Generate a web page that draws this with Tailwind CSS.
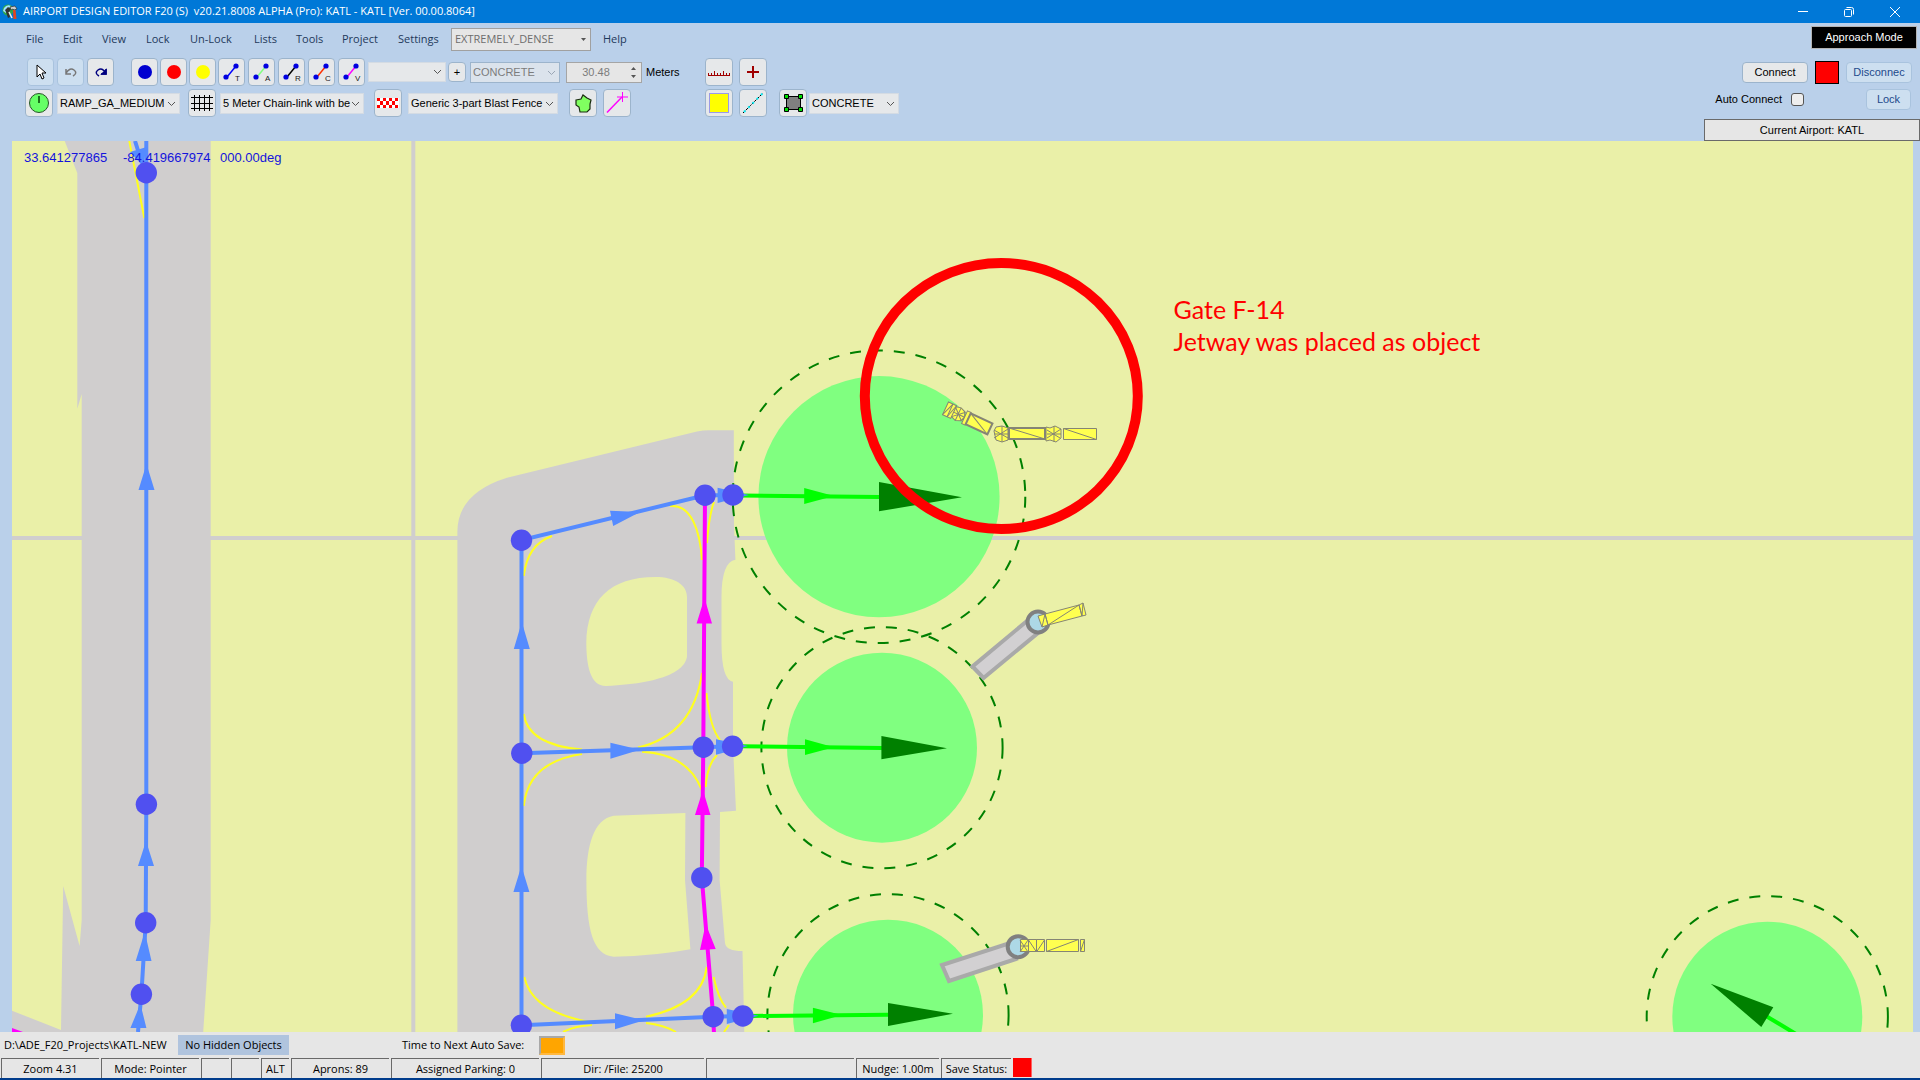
<!DOCTYPE html>
<html lang="en">
<head>
<meta charset="utf-8">
<title>Airport Design Editor F20</title>
<script src="https://cdn.jsdelivr.net/npm/@tailwindcss/browser@4"></script>
</head>
<body class="flex h-screen flex-col overflow-hidden bg-[#bad0ea] font-['Liberation_Sans',sans-serif] text-[11px] text-black">

<!-- Title bar -->
<header class="flex h-[23px] shrink-0 items-center bg-[#0078d7] text-white">
  <svg class="ml-[2px] mr-[5px] size-4" viewBox="0 0 16 16"><circle cx="6" cy="6" r="5.500" fill="#2fa84a"/><path d="M2 4q3-4 7-2l-3 3-2 4-3-2z" fill="#9fe0ff"/><path d="M3 6l3-3 3 2-2 3 1 5-2 1-2-6z" fill="#333"/><path d="M8 3l5-1 2 3-3 1-1-1-2 1z" fill="#ccc" stroke="#222" stroke-width=".6"/><path d="M11 6h2.500l1 9h-3z" fill="#e2451c"/><path d="M7 8l3 6" stroke="#eee" stroke-width="1.500"/></svg>
  <h1 class="whitespace-pre font-['Open_Sans',sans-serif] text-[11px]">AIRPORT DESIGN EDITOR F20 (S)  v20.21.8008 ALPHA (Pro): KATL - KATL [Ver. 00.00.8064]</h1>
  <div class="ml-auto mr-[2px] flex h-full">
    <button aria-label="Minimize" class="grid w-[46px] place-items-center"><svg class="size-3" viewBox="0 0 12 12" stroke="#fff" fill="none"><path d="M1 5.500h10"/></svg></button>
    <button aria-label="Restore" class="grid w-[46px] place-items-center"><svg class="size-3" viewBox="0 0 12 12" stroke="#fff" fill="none"><rect x="1.500" y="3.500" width="7" height="7" rx="1"/><path d="M3.500 1.500h5a2 2 0 0 1 2 2v5"/></svg></button>
    <button aria-label="Close" class="grid w-[46px] place-items-center"><svg class="size-3" viewBox="0 0 12 12" stroke="#fff" fill="none"><path d="M1 1l10 10M11 1L1 11"/></svg></button>
  </div>
</header>

<!-- Menus and toolbars -->
<div class="flex h-[118px] shrink-0 justify-between">
  <div class="flex flex-col gap-[2px]">
    <nav class="flex h-8 items-center pl-[26px] font-['Open_Sans',sans-serif] text-[11px] text-[#1e395b]">
      <a href="#" class="w-[37px]">File</a><a href="#" class="w-[39px]">Edit</a><a href="#" class="w-[44px]">View</a><a href="#" class="w-[44px]">Lock</a><a href="#" class="w-16">Un-Lock</a><a href="#" class="w-[42px]">Lists</a><a href="#" class="w-[46px]">Tools</a><a href="#" class="w-14">Project</a><a href="#" class="w-[53px]">Settings</a>
      <span class="relative w-[140px]">
        <select disabled aria-label="Scenery density" class="block h-[23px] w-full appearance-none border border-[#a0a0a0] bg-[#e6e6e6] pl-[3px] text-[#6d6d6d]"><option>EXTREMELY_DENSE</option></select>
        <svg class="pointer-events-none absolute right-1 top-[9px] h-[5px] w-[7px]" viewBox="0 0 7 5"><path d="M1 1h5L3.500 4z" fill="#555"/></svg>
      </span>
      <a href="#" class="ml-3">Help</a>
    </nav>

    <div class="flex h-[30px] items-center pl-[27px]">
      <div class="flex gap-[3px]">
        <button aria-label="Pointer" class="grid h-7 w-[27px] place-items-center rounded border border-[#a9c3de] bg-[#cddff0]"><svg class="size-5" viewBox="0 0 20 20"><path d="M6 3v12l3-3 2 5 2-1-2-5h4z" fill="#fff" stroke="#000"/></svg></button>
        <button aria-label="Undo" class="grid h-7 w-[27px] place-items-center rounded border border-[#a9c3de] bg-[#cddff0]"><svg class="size-5" viewBox="0 0 20 20" fill="none" stroke="#777" stroke-width="1.500"><path d="M5 7v5h5M5 11q4-6 8-3t-1 6"/></svg></button>
        <button aria-label="Redo" class="grid h-7 w-[27px] place-items-center rounded border border-[#9cb4cc] bg-[#e6e8ea]"><svg class="size-5" viewBox="0 0 20 20" fill="none" stroke="#000080" stroke-width="1.500"><path d="M15 7v5h-5M15 11q-4-6-8-3t1 6"/><path d="M11 12h4V8z" fill="#000080"/></svg></button>
      </div>
      <div class="ml-[17px] flex gap-[2px]">
        <button aria-label="Blue node" class="grid h-7 w-[27px] place-items-center rounded border border-[#9cb4cc] bg-[#e6e8ea]"><span class="size-[14px] rounded-full bg-[#0000d0]"></span></button>
        <button aria-label="Red node" class="grid h-7 w-[27px] place-items-center rounded border border-[#9cb4cc] bg-[#e6e8ea]"><span class="size-[14px] rounded-full bg-[#ff0000]"></span></button>
        <button aria-label="Yellow node" class="grid h-7 w-[27px] place-items-center rounded border border-[#9cb4cc] bg-[#e6e8ea]"><span class="size-[14px] rounded-full bg-[#ffff00]"></span></button>
      </div>
      <div class="ml-[2px] flex gap-[3px]">
        <button aria-label="Taxi link" class="grid h-7 w-[27px] place-items-center rounded border border-[#9cb4cc] bg-[#e6e8ea]"><svg class="size-6" viewBox="0 0 24 24"><path d="M7 17L16 6" stroke="#0000ff" stroke-width="1.500"/><circle cx="6" cy="17" r="2.600" fill="#0000e0"/><circle cx="16" cy="6" r="2.600" fill="#0000e0"/><text x="15" y="21" font-size="8" fill="#222">T</text></svg></button>
        <button aria-label="Apron link" class="grid h-7 w-[27px] place-items-center rounded border border-[#9cb4cc] bg-[#e6e8ea]"><svg class="size-6" viewBox="0 0 24 24"><path d="M7 17L16 6" stroke="#80ff80" stroke-width="1.500"/><circle cx="6" cy="17" r="2.600" fill="#0000e0"/><circle cx="16" cy="6" r="2.600" fill="#0000e0"/><text x="15" y="21" font-size="8" fill="#222">A</text></svg></button>
        <button aria-label="Runway link" class="grid h-7 w-[27px] place-items-center rounded border border-[#9cb4cc] bg-[#e6e8ea]"><svg class="size-6" viewBox="0 0 24 24"><path d="M7 17L16 6" stroke="#000" stroke-width="1.500"/><circle cx="6" cy="17" r="2.600" fill="#0000e0"/><circle cx="16" cy="6" r="2.600" fill="#0000e0"/><text x="15" y="21" font-size="8" fill="#222">R</text></svg></button>
        <button aria-label="Closed link" class="grid h-7 w-[27px] place-items-center rounded border border-[#9cb4cc] bg-[#e6e8ea]"><svg class="size-6" viewBox="0 0 24 24"><path d="M7 17L16 6" stroke="#ff3000" stroke-width="1.500"/><circle cx="6" cy="17" r="2.600" fill="#0000e0"/><circle cx="16" cy="6" r="2.600" fill="#0000e0"/><text x="15" y="21" font-size="8" fill="#222">C</text></svg></button>
        <button aria-label="Vehicle link" class="grid h-7 w-[27px] place-items-center rounded border border-[#9cb4cc] bg-[#e6e8ea]"><svg class="size-6" viewBox="0 0 24 24"><path d="M7 17L16 6" stroke="#ff00ff" stroke-width="1.500"/><circle cx="6" cy="17" r="2.600" fill="#0000e0"/><circle cx="16" cy="6" r="2.600" fill="#0000e0"/><text x="15" y="21" font-size="8" fill="#222">V</text></svg></button>
      </div>
      <span class="relative ml-[3px] w-[78px]">
        <select aria-label="Taxiway name" class="block h-5 w-full appearance-none border border-[#d4dbe3] bg-[#e6e8ea]"><option></option></select>
        <svg class="pointer-events-none absolute right-1 top-[7px] h-[6px] w-[9px]" viewBox="0 0 9 6" fill="none" stroke="#555"><path d="M1 1l3.500 3.500L8 1"/></svg>
      </span>
      <button aria-label="Add taxiway name" class="ml-[2px] grid h-5 w-[18px] place-items-center rounded border border-[#9cb4cc] bg-[#e6e8ea]">+</button>
      <span class="relative ml-1 w-[90px]">
        <select disabled aria-label="Taxiway surface" class="block h-[21px] w-full appearance-none border border-[#9cb4cc] bg-[#dbe3ec] pl-[2px] text-[#7c7c7c]"><option>CONCRETE</option></select>
        <svg class="pointer-events-none absolute right-1 top-[8px] h-[6px] w-[9px]" viewBox="0 0 9 6" fill="none" stroke="#9aa6b5"><path d="M1 1l3.500 3.500L8 1"/></svg>
      </span>
      <span class="relative ml-[6px] w-[76px]">
        <input id="width" disabled value="30.48" class="block h-[21px] w-full border border-[#a5a5a5] bg-[#e6e6e6] pr-4 text-center text-[#7c7c7c]">
        <svg class="pointer-events-none absolute right-[5px] top-1 h-[13px] w-[7px]" viewBox="0 0 7 13" fill="#555"><path d="M1 4h5L3.500 1zM1 9h5L3.500 12z"/></svg>
      </span>
      <label for="width" class="ml-[4px] w-[59px]">Meters</label>
      <button aria-label="Ruler" class="grid h-7 w-7 place-items-center rounded border border-[#9cb4cc] bg-[#e6e8ea]"><svg class="size-6" viewBox="0 0 24 24" stroke="#a00000"><path d="M1 15.500h22M1.500 13v2M4.500 13v2M7.500 11v4M10.500 13v2M13.500 13v2M16.500 11v4M19.500 13v2M22.500 13v2"/></svg></button>
      <button aria-label="Add point" class="ml-[6px] grid h-7 w-7 place-items-center rounded border border-[#9cb4cc] bg-[#e6e8ea]"><svg class="size-6" viewBox="0 0 24 24" stroke="#a00000" stroke-width="2"><path d="M6 12h12M12 6v12"/></svg></button>
    </div>

    <div class="flex h-7 items-center pl-[25px]">
      <button aria-label="Parking" class="grid h-7 w-7 place-items-center rounded border border-[#9cb4cc] bg-[#e6e8ea]"><svg class="size-6" viewBox="0 0 24 24"><circle cx="12" cy="12" r="9.500" fill="#66ff66" stroke="#285528"/><path d="M12 5v7" stroke="#064006" stroke-width="1.500"/></svg></button>
      <span class="relative ml-1 w-[123px]">
        <select aria-label="Parking type" class="block h-[21px] w-full appearance-none border border-[#d4dbe3] bg-[#e6e8ea] pl-[2px]"><option>RAMP_GA_MEDIUM</option></select>
        <svg class="pointer-events-none absolute right-1 top-[8px] h-[6px] w-[9px]" viewBox="0 0 9 6" fill="none" stroke="#555"><path d="M1 1l3.500 3.500L8 1"/></svg>
      </span>
      <button aria-label="Chain-link fence" class="ml-2 grid h-7 w-7 place-items-center rounded border border-[#9cb4cc] bg-[#e6e8ea]"><svg class="size-6" viewBox="0 0 24 24" stroke="#000"><path d="M1 6.500h22M1 12.500h22M1 17.500h22M4.500 4v16M9.500 4v16M14.500 4v16M19.500 4v16"/></svg></button>
      <span class="relative ml-1 w-[144px]">
        <select aria-label="Fence type" class="block h-[21px] w-full appearance-none border border-[#d4dbe3] bg-[#e6e8ea] pl-[2px] pr-3"><option>5 Meter Chain-link with be</option></select>
        <svg class="pointer-events-none absolute right-1 top-[8px] h-[6px] w-[9px]" viewBox="0 0 9 6" fill="none" stroke="#555"><path d="M1 1l3.500 3.500L8 1"/></svg>
      </span>
      <button aria-label="Blast fence" class="ml-[10px] grid h-7 w-7 place-items-center rounded border border-[#9cb4cc] bg-[#e6e8ea]"><svg class="size-6" viewBox="0 0 24 24"><path d="M1 7h22v10H1z" fill="#fff"/><path d="M1 7h3v3H1zM7 7h3v3H7zM13 7h3v3h-3zM19 7h3v3h-3zM4 10h3v4H4zM10 10h3v4h-3zM16 10h3v4h-3zM1 14h3v3H1zM7 14h3v3H7zM13 14h3v3h-3zM19 14h3v3h-3z" fill="#f00"/></svg></button>
      <span class="relative ml-[6px] w-[150px]">
        <select aria-label="Blast fence type" class="block h-[21px] w-full appearance-none border border-[#d4dbe3] bg-[#e6e8ea] pl-[2px] pr-3"><option>Generic 3-part Blast Fence</option></select>
        <svg class="pointer-events-none absolute right-1 top-[8px] h-[6px] w-[9px]" viewBox="0 0 9 6" fill="none" stroke="#555"><path d="M1 1l3.500 3.500L8 1"/></svg>
      </span>
      <button aria-label="Polygon" class="ml-[11px] grid h-7 w-7 place-items-center rounded border border-[#9cb4cc] bg-[#e6e8ea]"><svg class="size-6" viewBox="0 0 24 24"><path d="M5 9l5-1 2-4 4 3 4 2-1 4v5l-3 3H9l-1-5-3-2z" fill="#80ff60" stroke="#1a2a10" stroke-width="1.200"/></svg></button>
      <button aria-label="Edge light" class="ml-[6px] grid h-7 w-7 place-items-center rounded border border-[#9cb4cc] bg-[#e6e8ea]"><svg class="size-6" viewBox="0 0 24 24" stroke="#ff00ff" fill="none"><path d="M2 21.500L17 6" stroke-width="1.500"/><path d="M12 6h11M17.500 1v10"/></svg></button>
      <button aria-label="Yellow apron" class="ml-[74px] grid h-7 w-7 place-items-center rounded border border-[#9cb4cc] bg-[#e6e8ea]"><span class="size-5 border border-[#9a9ae8] bg-[#ffff00]"></span></button>
      <button aria-label="Dashed line" class="ml-[6px] grid h-7 w-7 place-items-center rounded border border-[#9cb4cc] bg-[#e6e8ea]"><svg class="size-6" viewBox="0 0 24 24"><path d="M2 22L22 2" stroke="#000" stroke-dasharray="3 1"/><path d="M3 21L22 2" stroke="#00e8f0" stroke-width="2" stroke-dasharray="2 4"/></svg></button>
      <button aria-label="Apron" class="ml-3 grid h-7 w-7 place-items-center rounded border border-[#9cb4cc] bg-[#e6e8ea]"><svg class="size-6" viewBox="0 0 24 24" stroke="#000"><path d="M5.500 5.500h14v13h-14z" fill="#808080"/><path d="M3.500 3.500h4v4h-4zM17.500 3.500h4v4h-4zM3.500 16.500h4v4h-4zM17.500 16.500h4v4h-4z" fill="#00e000"/></svg></button>
      <span class="relative ml-[2px] w-[90px]">
        <select aria-label="Apron surface" class="block h-[21px] w-full appearance-none border border-[#d4dbe3] bg-[#e6e8ea] pl-[2px]"><option>CONCRETE</option></select>
        <svg class="pointer-events-none absolute right-1 top-[8px] h-[6px] w-[9px]" viewBox="0 0 9 6" fill="none" stroke="#555"><path d="M1 1l3.500 3.500L8 1"/></svg>
      </span>
    </div>
  </div>

  <div class="flex w-[216px] flex-col items-end pt-[3px]">
    <button class="mr-[3px] h-[23px] w-[106px] border border-[#b4b4b4] bg-black text-white">Approach Mode</button>
    <div class="mr-2 mt-3 flex items-center">
      <button class="h-[21px] w-[66px] rounded border border-[#9cb4cc] bg-[#e6e8ea]">Connect</button>
      <span class="ml-[7px] h-[23px] w-6 border border-black bg-[#ff0000]"></span>
      <button class="ml-[7px] h-[21px] w-[66px] rounded border border-[#a9c3de] bg-[#cddff0] text-[#1e4a8c]">Disconnec</button>
    </div>
    <div class="mr-[9px] mt-[5px] flex items-center">
      <label for="auto" class="mr-[9px]">Auto Connect</label>
      <input id="auto" type="checkbox" class="mr-[62px] size-[13px] appearance-none rounded-[3px] border border-[#555] bg-[#eeeeee]">
      <button class="h-[21px] w-[45px] rounded border border-[#a9c3de] bg-[#cddff0] text-[#1e4a8c]">Lock</button>
    </div>
    <div class="mt-auto grid h-[22px] w-full place-items-center border border-[#6a6a6a] bg-[#e6e6e6]">Current Airport: KATL</div>
  </div>
</div>

<!-- Airport map -->
<main class="relative mx-3 mr-[7px] min-h-0 flex-1 overflow-hidden bg-[#eaf0a8]">
  <svg class="block size-full" viewBox="12 141 1901 891" preserveAspectRatio="xMidYMid slice">
    <rect x="12" y="141" width="1901" height="891" fill="#eaf0a8"/>
    <path d="M413.300 141V1032M12 538H1913" stroke="#d0cece" stroke-width="4"/>
    <g fill="#d0cece">
      <path d="M64.700 141L77.300 173V408.700L81.700 394V920L79.600 946L63.200 886L61 1030L12 1010.700V1032H203.200L210.700 920V141z"/>
      <path fill-rule="evenodd" d="M733.800 430.300L712 430.300Q704 430 697 431.500L507 477.700Q458 493 457.400 531V1032H744.300L742.500 951Q726 951 725 943L719.600 880L720 812L736 810.700L733 746V681.700Q721.500 680 721.500 643V597Q721.500 562 735.400 559.700L734 525zM655.500 577C675 577 687 585 687 597V656C686 668 670 683 606 686C590 686 586.500 665 586.300 643C587 600 610 577 655.500 577zM685.400 813L613.600 815.700C594 819 586.400 845 586.400 880C586.400 930 593 955 613.600 956.700Q655 956 690.400 949.300L685 880z"/>
    </g>
    <path d="M12 1028L23 1032H12z" fill="#ff00ff"/>

    <g fill="none" stroke="#ffff1e" stroke-width="2">
      <path d="M129.300 141L144.300 218M523.800 576Q527 545 552 536M670 506C692 504 700 532 702 560M714 502Q709 515 707 543M523.800 714Q528 745 582 749.500M638 747.500Q693 735 702 673M706.500 693Q710 728 720 740M582 754Q528 762 523.800 806M642 751.700Q688 754 701.800 790M717 755Q707 765 705.700 787M524.300 977Q532 1012 590 1022M646 1016.700Q702 1005 706.800 967M713.600 977Q718 998 726 1007.700M646 1023Q664 1025 676 1032M563 1032Q574 1026 592 1025M724 1032L729 1025"/>
    </g>

    <!-- Parking spots -->
    <g fill="#80ff80">
      <circle cx="879" cy="496.700" r="120.600"/><circle cx="882" cy="747.700" r="95"/><circle cx="888" cy="1014.700" r="95"/><circle cx="1767.300" cy="1016.700" r="95"/>
    </g>
    <g fill="none" stroke="#008000" stroke-width="2" stroke-dasharray="11 11">
      <circle cx="879" cy="496.700" r="146.300"/><circle cx="882" cy="747.700" r="120.600"/><circle cx="888" cy="1014.700" r="120.600"/><circle cx="1767.300" cy="1016.700" r="120.600"/>
    </g>

    <!-- Taxi links -->
    <g fill="none" stroke-width="4">
      <path stroke="#558bff" d="M135 141L142 163M146.300 141V804L145.700 923L141.400 994L138 1032M521.500 1025V753L521.500 540L705 495.300H733M521.800 753.300L703.300 747.300L732.600 746.300M521.400 1025.300L713 1016.700L743 1016"/>
      <path stroke="#00ff00" d="M740 495.500L879 497M740 746.300L882 748M750 1016L888 1014.700M1766 1016L1796 1034"/>
      <path stroke="#ff00ff" d="M705 495L703.300 747L701.800 877.700L713.200 1016.700L714 1034"/>
    </g>
    <g fill="#558bff">
      <path d="M130 152L146.700 147L143 166zM146.500 464L154.500 490H138.500zM146 841L154 866H138zM144.800 932L151.500 961H135.700zM140.400 1004L146.400 1028H130.400zM521.800 622L529.800 649H513.800zM521.400 866L529.400 892H513.400z"/>
      <path d="M610 510.700L613.200 526L640 512zM610.400 742.700V758.700L640 749.700zM615 1013.300V1029.300L644 1020.300zM717.600 487.700V503L749 495zM716 739.300V754.700L748 746zM726.800 1009V1024L758.600 1015.700z"/>
    </g>
    <path fill="#ff00ff" d="M704.500 598L712 623.500H696.600zM702.900 790L710.500 815H695zM705.700 924L715.700 949L700 950z"/>
    <path fill="#00ff00" d="M804.200 488V504L834 496zM805 739.300V755L834 747.300zM812.900 1007.700V1023.300L842 1015z"/>
    <path fill="#008000" d="M879 482V511.300L962 497.300zM881.400 736V759.300L947 748.300zM888 1003V1026L953 1013.700zM1710.700 983.700L1773.300 1007.300L1761.300 1027z"/>
    <g fill="#5050f0">
      <circle cx="146.300" cy="172.700" r="10.700"/><circle cx="146.400" cy="804.300" r="10.700"/><circle cx="145.700" cy="922.700" r="10.700"/><circle cx="141.400" cy="994.300" r="10.700"/>
      <circle cx="521.500" cy="540.300" r="10.700"/><circle cx="521.800" cy="753.300" r="10.700"/><circle cx="521.400" cy="1025.300" r="10.700"/>
      <circle cx="705" cy="495.300" r="10.700"/><circle cx="733" cy="495" r="10.700"/><circle cx="703.300" cy="747.300" r="10.700"/><circle cx="732.600" cy="746.300" r="10.700"/>
      <circle cx="701.800" cy="877.700" r="10.700"/><circle cx="713.200" cy="1016.700" r="10.700"/><circle cx="742.900" cy="1016" r="10.700"/>
    </g>

    <!-- Jetways -->
    <g fill="#ffff50" stroke="#858575">
      <g transform="translate(945.500 408.300) rotate(25)">
        <path d="M0-7h5v14H0zM5-7h4v14H5zM9-6l5-1 5 2 2 5-2 5-5 2-5-2zM21-7h4v14h-4z"/><path d="M0 7L5-7M5 7L9-7M14-7v14M9-5l11 10M9 5L20-5M9 0h12"/><path d="M25-6h24v12H25z" stroke-width="2"/><path d="M25-6l24 12"/>
      </g>
      <path d="M994 431l2-4 6-1 6 2v12l-6 2-6-2zM1002 426v16M994 430l14 8M994 438l14-9M994 434h14"/>
      <path d="M1009 428h36v11h-36z" stroke-width="2"/><path d="M1009 428l36 11M1046 427l4 1 5-2 6 3v9l-5 4-6-2-4 1zM1054 426v16M1047 430l13 8M1047 438l14-9M1047 434h14"/>
      <path d="M1063.500 428.500h33v11h-33zl33 11"/>
    </g>
    <g fill="#d2d0d2" stroke="#a9a9a9" stroke-width="4">
      <path d="M972.500 666.500L983.500 678L1038 633L1027 621z"/><path d="M942 965L949 981L1016 959L1010 943z"/>
    </g>
    <g fill="#add8e6" stroke="#808080" stroke-width="4"><circle cx="1038" cy="622" r="10.500"/><circle cx="1018.200" cy="946.700" r="10.500"/></g>
    <g fill="#ffff50" stroke="#858575">
      <path d="M1038 616l7-2 3 11-6 2zM1045 614l34-9 3 11-34 9zM1079 605l4-2 3 12-4 1zM1048 625L1079 605M1042 627l3-13M1082 616l1-13"/>
      <path d="M1020.500 939.500h8v12h-8zM1028.500 939.500h8v12h-8zM1036.500 939.500h8v12h-8zM1046.500 939.500h32v12h-32zM1080.500 939.500h4v12h-4zM1020 940l8 12M1020 952l8-12M1020 946h8M1028.500 940l8 12M1036.500 952l8-12M1046.500 951.500l32-12M1080.500 951.500l4-12"/>
    </g>
    <ellipse cx="1001.300" cy="396" rx="136.500" ry="133" fill="none" stroke="#ff0000" stroke-width="10"/>
  </svg>
  <div class="absolute left-3 top-[9px] flex text-[13px] leading-4 text-[#1414dc]"><span class="w-[99px]">33.641277865</span><span class="w-[97px]">-84.419667974</span><span>000.00deg</span></div>
  <p class="absolute left-[61%] top-[152px] ml-[2px] font-['Lato',sans-serif] text-[25px] leading-8 text-[#ff0000]">Gate F-14<br>Jetway was placed as object</p>
</main>

<!-- Status bars -->
<footer class="shrink-0 border-b-2 border-[#003c8c] bg-[#e6e6e6] font-['Open_Sans',sans-serif] text-[11px]">
  <div class="flex h-[26px] items-center pl-1">
    <span class="w-[174px]">D:\ADE_F20_Projects\KATL-NEW</span>
    <span class="grid h-5 w-[111px] place-items-center bg-[#b0c4de]">No Hidden Objects</span>
    <span class="ml-[113px] w-[137px]">Time to Next Auto Save:</span>
    <span class="h-[19px] w-[26px] border-2 border-[#a8a8a8] border-b-[#ffb840] border-r-[#ffb840] bg-[#ffa500]"></span>
  </div>
  <div class="flex h-5 gap-[2px] pl-px text-center leading-[19px]">
    <span class="w-[98px] border-l border-t border-[#696969]">Zoom 4.31</span>
    <span class="w-[98px] border-l border-t border-[#696969]">Mode: Pointer</span>
    <span class="w-7 border-l border-t border-[#696969]"></span>
    <span class="w-7 border-l border-t border-[#696969]"></span>
    <span class="w-7 border-l border-t border-[#696969]">ALT</span>
    <span class="w-[98px] border-l border-t border-[#696969]">Aprons: 89</span>
    <span class="w-[148px] border-l border-t border-[#696969]">Assigned Parking: 0</span>
    <span class="w-[163px] border-l border-t border-[#696969]">Dir: /File: 25200</span>
    <span class="w-[148px] border-l border-t border-[#696969]"></span>
    <span class="w-[83px] border-l border-t border-[#696969]">Nudge: 1.00m</span>
    <span class="w-[70px] border-l border-t border-[#696969]">Save Status:</span>
    <span class="h-[19px] w-[19px] border-r border-[#ff6060] bg-[#ff0000]"></span>
  </div>
</footer>
</body>
</html>
